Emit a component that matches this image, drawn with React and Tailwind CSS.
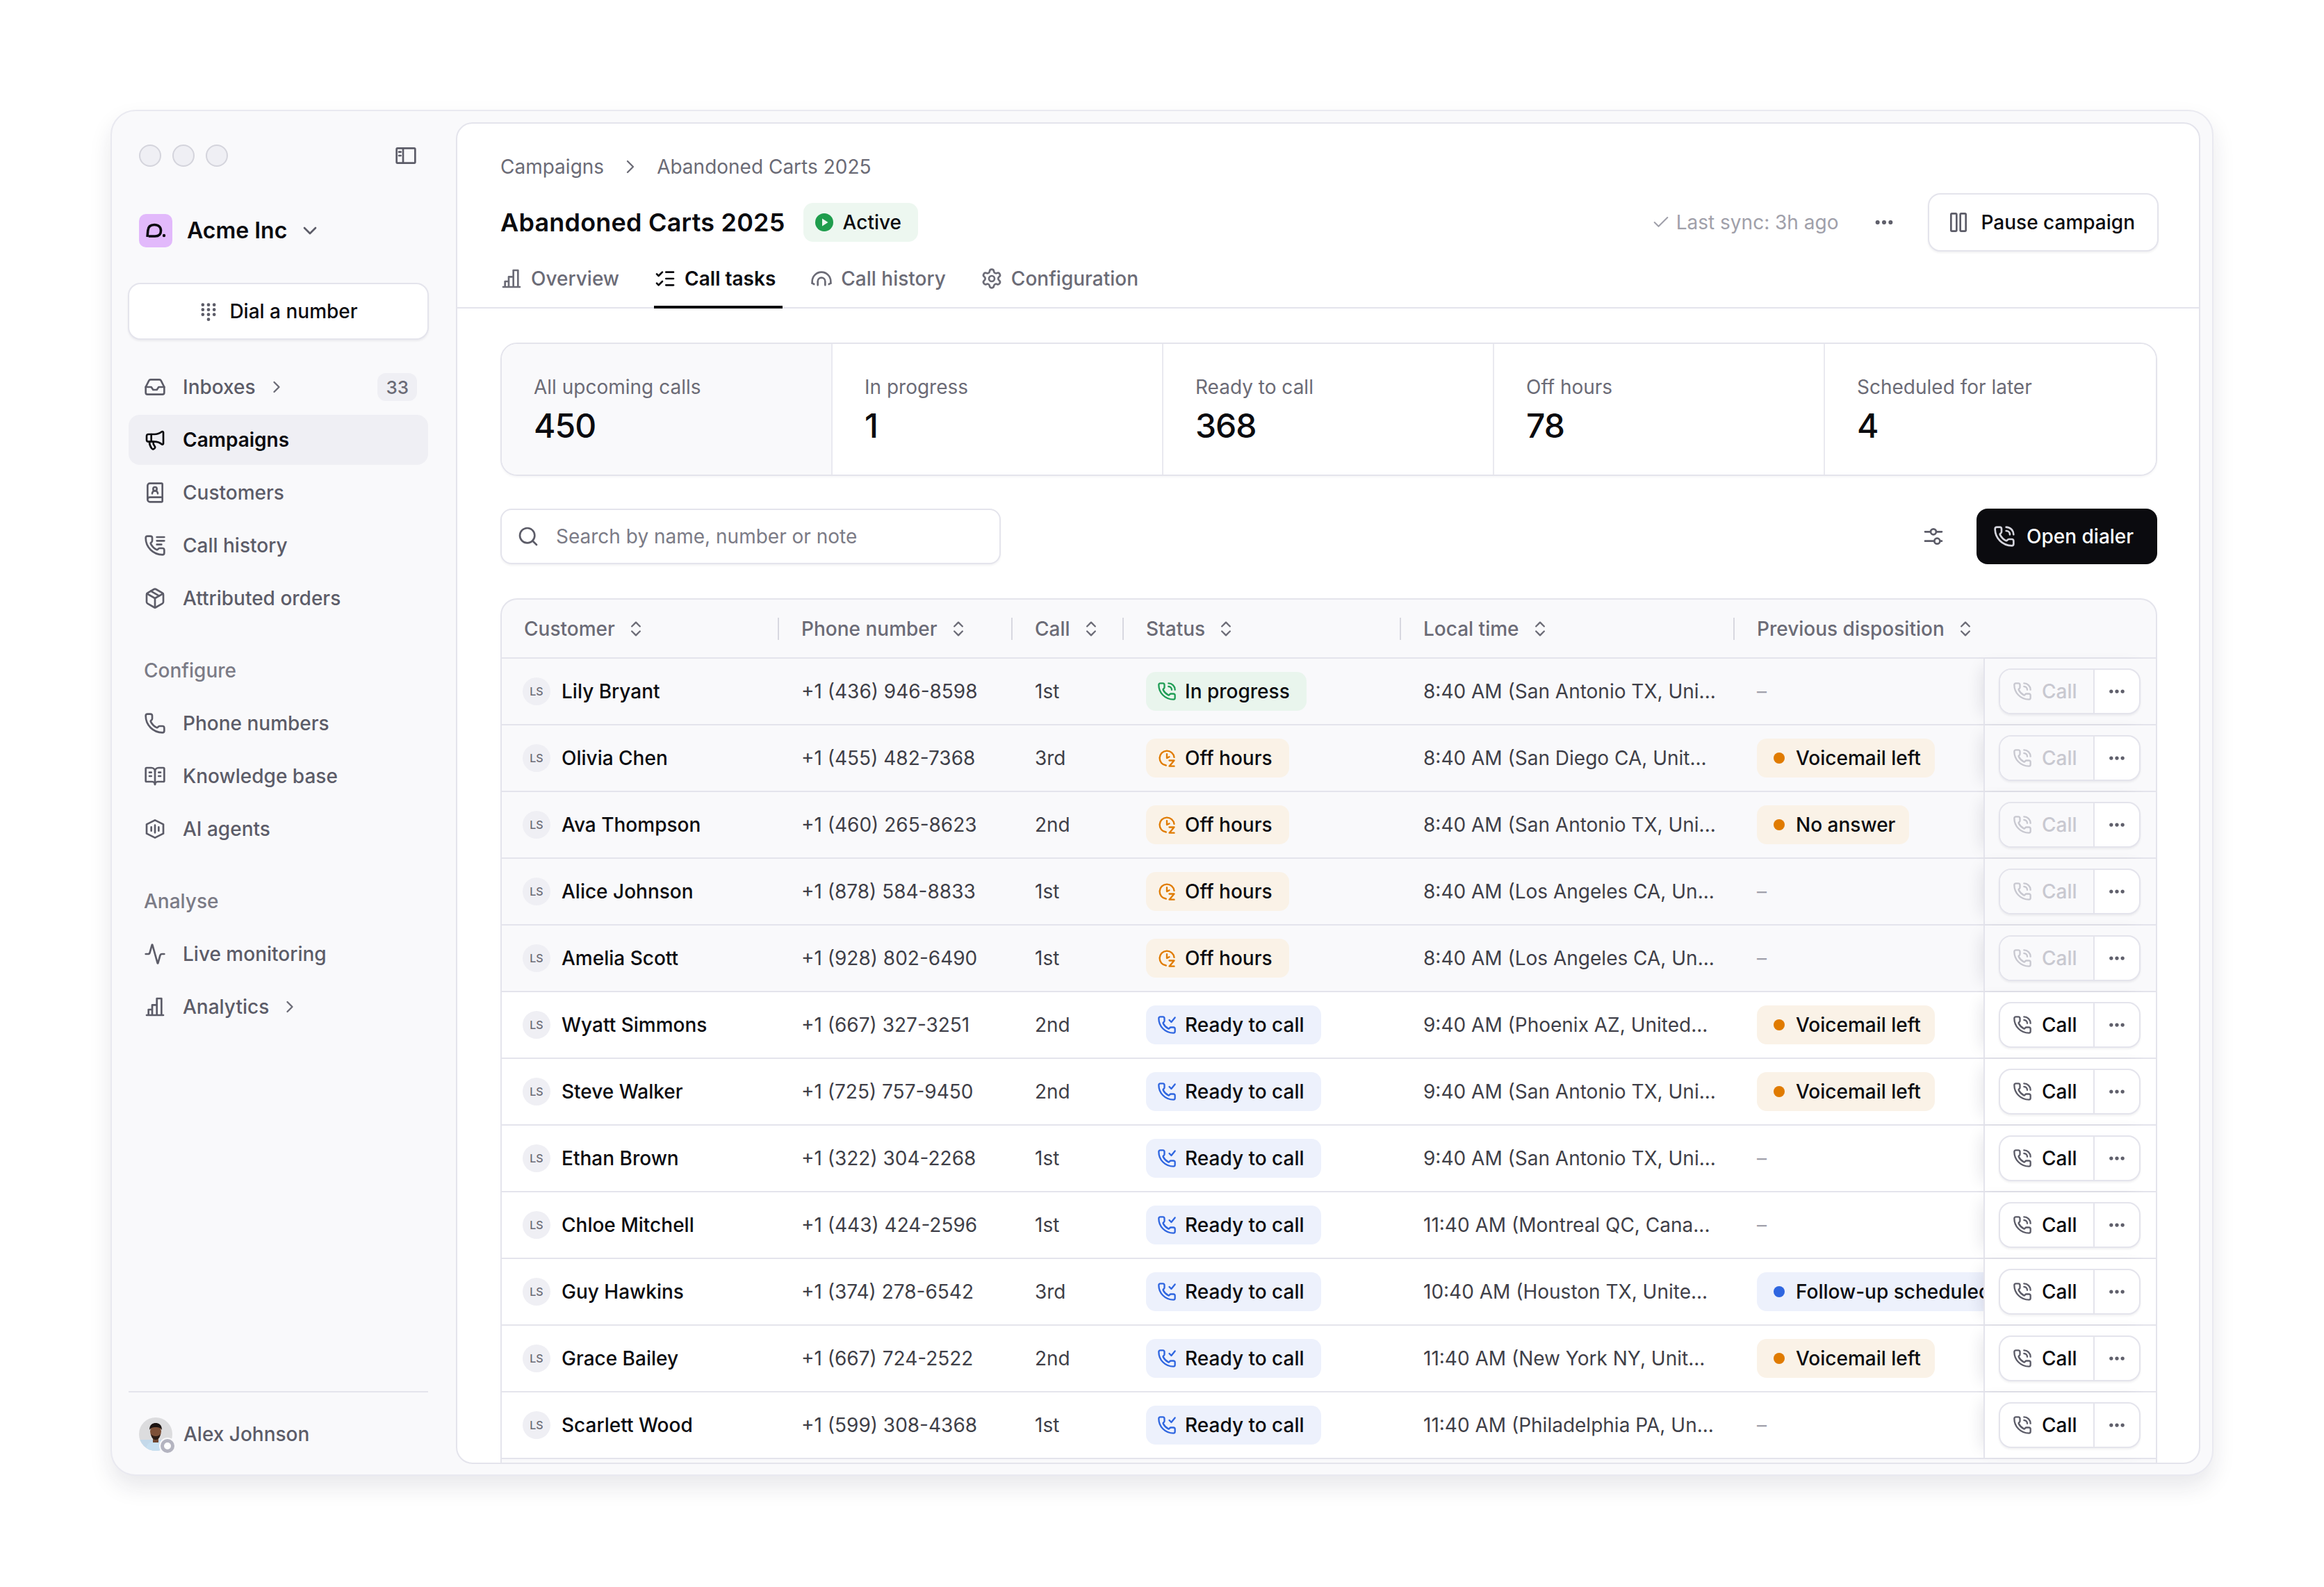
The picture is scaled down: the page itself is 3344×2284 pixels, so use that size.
import {
  BookOpenText,
  BookUser,
  Check,
  ChevronDown,
  ChevronRight,
  ChevronsUpDown,
  Activity,
  Ellipsis,
  Inbox,
  ListChecks,
  Megaphone,
  Package,
  Phone,
  Search,
  Settings,
} from 'lucide-react'

const PHONE = 'M13.832 16.568a1 1 0 0 0 1.213-.303l.355-.465A2 2 0 0 1 17 15h3a2 2 0 0 1 2 2v3a2 2 0 0 1-2 2A18 18 0 0 1 2 4a2 2 0 0 1 2-2h3a2 2 0 0 1 2 2v3a2 2 0 0 1-.8 1.6l-.468.351a1 1 0 0 0-.292 1.233 14 14 0 0 0 6.392 6.384'

function Svg({ className, children, strokeWidth = 2 }) {
  return (
    <svg className={className} viewBox="0 0 24 24" fill="none" stroke="currentColor" strokeWidth={strokeWidth} strokeLinecap="round" strokeLinejoin="round">
      {children}
    </svg>
  )
}

const PanelIcon = (p) => (
  <Svg {...p}>
    <rect x="2" y="4" width="20" height="16" rx="1" />
    <path d="M9 4v16M4.5 8h2M4.5 12h2" />
  </Svg>
)
const DialIcon = ({ className }) => (
  <svg className={className} viewBox="0 0 24 24" fill="currentColor">
    {[4, 10, 16].map((y) => [5, 12, 19].map((x) => <circle key={`${x}-${y}`} cx={x} cy={y} r="2" />))}
    <circle cx="12" cy="22" r="2" />
  </svg>
)
const CallHistoryIcon = (p) => (
  <Svg {...p}>
    <path d={PHONE} />
    <path d="M14 3h8M14 7h8M14 11h5" />
  </Svg>
)
const HexBarsIcon = (p) => (
  <Svg {...p}>
    <path d="M12 2.5 21 7v10l-9 4.5L3 17V7z" />
    <path d="M8 10v4M12 8v8M16 10v4" />
  </Svg>
)
const BarsIcon = (p) => (
  <Svg {...p}>
    <path d="M3 21h18M5 21v-6h4v6M9 21V10h5v11M14 21V3h5v18" />
  </Svg>
)
const ArcIcon = (p) => (
  <Svg {...p}>
    <path d="M2 17v-2a10 10 0 0 1 20 0v2" />
    <path d="M8 19v-4a4 4 0 0 1 8 0v4" />
    <path d="M2 17l2 1M22 17l-2 1" />
  </Svg>
)
const PauseIcon = (p) => (
  <Svg {...p}>
    <rect x="4" y="2.5" width="6" height="19" rx="1" />
    <rect x="14" y="2.5" width="6" height="19" rx="1" />
  </Svg>
)
const SliderIcon = (p) => (
  <Svg {...p}>
    <path d="M3 7h6M15 7h6M3 17h10M19 17h2" />
    <circle cx="12" cy="7" r="3" />
    <circle cx="16" cy="17" r="3" />
  </Svg>
)
const PhoneCallIcon = (p) => (
  <Svg {...p}>
    <path d={PHONE} />
    <path d="M14 2a8 8 0 0 1 8 8M14 6a4 4 0 0 1 4 4" />
  </Svg>
)
const PhoneCheckIcon = (p) => (
  <Svg {...p}>
    <path d={PHONE} />
    <path d="m15 6 2.5 2.5L22 3" />
  </Svg>
)
const SnoozeIcon = (p) => (
  <Svg {...p}>
    <path d="M21 11a9 9 0 1 0-10 10" />
    <path d="M12 7v5l3-1.5" />
    <path d="M15 15h6l-6 7h6" />
  </Svg>
)

const Dot = ({ className }) => <span className={`h-[16px] w-[16px] shrink-0 rounded-full ${className}`} />

const NAV_MAIN = [
  { label: 'Inboxes', icon: Inbox, chevron: true, badge: '33' },
  { label: 'Campaigns', icon: Megaphone, active: true },
  { label: 'Customers', icon: BookUser },
  { label: 'Call history', icon: CallHistoryIcon },
  { label: 'Attributed orders', icon: Package },
]
const NAV_CONFIGURE = [
  { label: 'Phone numbers', icon: Phone },
  { label: 'Knowledge base', icon: BookOpenText },
  { label: 'AI agents', icon: HexBarsIcon },
]
const NAV_ANALYSE = [
  { label: 'Live monitoring', icon: Activity },
  { label: 'Analytics', icon: BarsIcon, chevron: true },
]

const STATS = [
  { label: 'All upcoming calls', value: '450', active: true },
  { label: 'In progress', value: '1' },
  { label: 'Ready to call', value: '368' },
  { label: 'Off hours', value: '78' },
  { label: 'Scheduled for later', value: '4' },
]

const STATUS = {
  progress: { label: 'In progress', icon: PhoneCallIcon, pill: 'bg-[#e9f5ed]', tone: 'text-[#1f9d55]' },
  off: { label: 'Off hours', icon: SnoozeIcon, pill: 'bg-[#faf2e7]', tone: 'text-[#e07b00]' },
  ready: { label: 'Ready to call', icon: PhoneCheckIcon, pill: 'bg-[#edf1fc]', tone: 'text-[#2f66e0]' },
}

const DISPOSITION = {
  vm: { label: 'Voicemail left', pill: 'bg-[#faf2e7]', dot: 'bg-[#e07b00]' },
  na: { label: 'No answer', pill: 'bg-[#faf2e7]', dot: 'bg-[#e07b00]' },
  fu: { label: 'Follow-up scheduled', pill: 'bg-[#edf1fc]', dot: 'bg-[#2f66e0]' },
}

const ROWS = [
  ['Lily Bryant', '+1 (436) 946-8598', '1st', 'progress', '8:40 AM (San Antonio TX, Uni...', null, true],
  ['Olivia Chen', '+1 (455) 482-7368', '3rd', 'off', '8:40 AM (San Diego CA, Unit...', 'vm', true],
  ['Ava Thompson', '+1 (460) 265-8623', '2nd', 'off', '8:40 AM (San Antonio TX, Uni...', 'na', true],
  ['Alice Johnson', '+1 (878) 584-8833', '1st', 'off', '8:40 AM (Los Angeles CA, Un...', null, true],
  ['Amelia Scott', '+1 (928) 802-6490', '1st', 'off', '8:40 AM (Los Angeles CA, Un...', null, true],
  ['Wyatt Simmons', '+1 (667) 327-3251', '2nd', 'ready', '9:40 AM (Phoenix AZ, United...', 'vm', false],
  ['Steve Walker', '+1 (725) 757-9450', '2nd', 'ready', '9:40 AM (San Antonio TX, Uni...', 'vm', false],
  ['Ethan Brown', '+1 (322) 304-2268', '1st', 'ready', '9:40 AM (San Antonio TX, Uni...', null, false],
  ['Chloe Mitchell', '+1 (443) 424-2596', '1st', 'ready', '11:40 AM (Montreal QC, Cana...', null, false],
  ['Guy Hawkins', '+1 (374) 278-6542', '3rd', 'ready', '10:40 AM (Houston TX, Unite...', 'fu', false],
  ['Grace Bailey', '+1 (667) 724-2522', '2nd', 'ready', '11:40 AM (New York NY, Unit...', 'vm', false],
  ['Scarlett Wood', '+1 (599) 308-4368', '1st', 'ready', '11:40 AM (Philadelphia PA, Un...', null, false],
]

function NavItem({ item }) {
  const Icon = item.icon
  return (
    <div className={`flex h-[72px] items-center gap-[24px] rounded-[16px] pl-[22px] pr-[16px] text-[28px] ${item.active ? 'bg-[#efeff4] font-semibold text-[#0b0b0f]' : 'font-medium text-[#5c5c68]'}`}>
      <Icon className="h-[32px] w-[32px] shrink-0" strokeWidth={2} />
      <span>{item.label}</span>
      {item.chevron && <ChevronRight className="-ml-[8px] h-[28px] w-[28px] text-[#6b6b76]" strokeWidth={2} />}
      {item.badge && (
        <span className="ml-auto flex h-[40px] items-center rounded-[12px] bg-[#efeff4] px-[12px] text-[26px] font-medium text-[#6b6b76]">{item.badge}</span>
      )}
    </div>
  )
}

function NavGroup({ title, items }) {
  return (
    <div className="mt-[48px]">
      <div className="mb-[20px] flex h-[40px] items-center pl-[22px] text-[28px] font-medium text-[#7b7b86]">{title}</div>
      <div className="flex flex-col gap-[4px]">
        {items.map((item) => <NavItem key={item.label} item={item} />)}
      </div>
    </div>
  )
}

function Sidebar() {
  return (
    <aside className="flex h-full w-[495px] shrink-0 flex-col pb-[34px] pl-[24px] pr-[40px] pt-[48px]">
      <div className="flex h-[32px] items-center pl-[15px] pr-[16px]">
        <div className="flex gap-[16px]">
          <span className="h-[32px] w-[32px] rounded-full border-2 border-[#d4d4dc] bg-[#efeff4]" />
          <span className="h-[32px] w-[32px] rounded-full border-2 border-[#d4d4dc] bg-[#efeff4]" />
          <span className="h-[32px] w-[32px] rounded-full border-2 border-[#d4d4dc] bg-[#efeff4]" />
        </div>
        <PanelIcon className="ml-auto h-[32px] w-[32px] text-[#5c5c68]" />
      </div>

      <div className="mt-[68px] flex h-[48px] items-center pl-[15px]">
        <div className="flex h-[48px] w-[48px] items-center justify-center rounded-[10px] bg-[#e2b9fb]">
          <svg className="h-[32px] w-[32px]" viewBox="0 0 32 32" fill="none" stroke="#0b0b0f" strokeWidth="3.6">
            <path d="M4 25 L4.8 16 C5.2 10 9 7.5 14 7.5 C20 7.5 23.5 11 23.5 16 C23.5 21 20.5 24 15 24 L6 24" />
            <circle cx="28" cy="23" r="2.2" fill="#0b0b0f" stroke="none" />
          </svg>
        </div>
        <span className="ml-[21px] text-[32px] font-semibold text-[#0b0b0f]">Acme Inc</span>
        <ChevronDown className="ml-[17px] h-[32px] w-[32px] text-[#5c5c68]" strokeWidth={2} />
      </div>

      <button type="button" className="-mx-[1px] mt-[51px] flex h-[82px] items-center justify-center gap-[16px] rounded-[18px] border-2 border-[#e4e4ec] bg-white text-[28px] font-medium text-[#0b0b0f] shadow-[0_2px_3px_rgba(20,20,40,0.06)]">
        <DialIcon className="h-[28px] w-[28px] text-[#5c5c68]" />
        <span>Dial a number</span>
      </button>

      <nav className="mt-[32px] flex flex-col gap-[4px]">
        {NAV_MAIN.map((item) => <NavItem key={item.label} item={item} />)}
      </nav>
      <NavGroup title="Configure" items={NAV_CONFIGURE} />
      <NavGroup title="Analyse" items={NAV_ANALYSE} />

      <div className="mt-auto flex items-center border-t-2 border-[#e4e4ec] pl-[15px] pt-[36px]">
        <div className="relative h-[48px] w-[48px] shrink-0">
          <svg className="h-[48px] w-[48px]" viewBox="0 0 48 48">
            <defs>
              <clipPath id="avatar-clip"><circle cx="24" cy="24" r="24" /></clipPath>
            </defs>
            <g clipPath="url(#avatar-clip)">
              <rect width="48" height="48" fill="#dcdcde" />
              <rect y="32" width="48" height="16" fill="#c4d9ea" />
              <path d="M10 48c0-10 6-14 14-14s14 4 14 14z" fill="#c7dff0" />
              <rect x="20" y="26" width="8" height="10" fill="#6f4630" />
              <ellipse cx="24" cy="20" rx="8" ry="10" fill="#7d5038" />
              <path d="M15 18c0-8 5-10 9-10s9 2 9 10c-2-3-4-4-9-4s-7 1-9 4z" fill="#1c1412" />
              <path d="M17 24c1 6 4 8 7 8s6-2 7-8c-2 2-4 3-7 3s-5-1-7-3z" fill="#2b1c16" />
            </g>
          </svg>
          <span className="absolute -bottom-[3px] -right-[3px] h-[20px] w-[20px] rounded-full border-[5px] border-[#b4b4c0] bg-white ring-2 ring-[#f9f9fb]" />
        </div>
        <span className="ml-[16px] text-[28px] font-medium text-[#5c5c68]">Alex Johnson</span>
      </div>
    </aside>
  )
}

function Tab({ icon: Icon, label, active }) {
  return (
    <div className={`-mb-[2px] flex h-[82px] items-center gap-[12px] border-b-4 pr-[10px] text-[28px] font-medium ${active ? 'border-[#0b0b0f] font-semibold text-[#0b0b0f]' : 'border-transparent text-[#6b6b76]'}`}>
      <Icon className="h-[32px] w-[32px] shrink-0" strokeWidth={2} />
      <span>{label}</span>
    </div>
  )
}

function Header() {
  return (
    <header className="border-b-2 border-[#e4e4ec] pl-[62px] pr-[58px] pt-[42px]">
      <div className="flex h-[40px] items-center text-[28px] text-[#6b6b76]">
        <span>Campaigns</span>
        <ChevronRight className="mx-[22px] h-[32px] w-[32px]" strokeWidth={1.75} />
        <span>Abandoned Carts 2025</span>
      </div>
      <div className="mt-[18px] flex h-[84px] items-center">
        <h1 className="text-[36px] font-semibold tracking-[0.2px] text-[#0b0b0f]">Abandoned Carts 2025</h1>
        <div className="ml-[26px] flex h-[56px] items-center gap-[14px] rounded-[14px] bg-[#edf7f0] pl-[17px] pr-[24px] text-[28px] font-medium text-[#0b0b0f]">
          <svg className="h-[26px] w-[26px]" viewBox="0 0 26 26">
            <circle cx="13" cy="13" r="13" fill="#1f9d4d" />
            <path d="M10 7.5v11l8.5-5.5z" fill="#edf7f0" />
          </svg>
          <span>Active</span>
        </div>
        <div className="ml-auto flex items-center gap-[8px] text-[28px] text-[#a0a0aa]">
          <Check className="h-[28px] w-[28px]" strokeWidth={1.75} />
          <span>Last sync: 3h ago</span>
        </div>
        <Ellipsis className="ml-[50px] h-[32px] w-[32px] text-[#5c5c68]" strokeWidth={2.5} />
        <button type="button" className="ml-[47px] flex h-[84px] items-center gap-[16px] rounded-[18px] border-2 border-[#e4e4ec] bg-white pl-[26px] pr-[32px] text-[28px] font-medium text-[#0b0b0f] shadow-[0_2px_3px_rgba(20,20,40,0.06)]">
          <PauseIcon className="h-[32px] w-[32px] text-[#5c5c68]" />
          <span>Pause campaign</span>
        </button>
      </div>
      <div className="flex gap-[40px]">
        <Tab icon={BarsIcon} label="Overview" />
        <Tab icon={ListChecks} label="Call tasks" active />
        <Tab icon={ArcIcon} label="Call history" />
        <Tab icon={Settings} label="Configuration" />
      </div>
    </header>
  )
}

function Stats() {
  return (
    <div className="mt-[49px] grid h-[192px] w-[2384px] grid-cols-5 overflow-hidden rounded-[24px] border-2 border-[#e4e4ec] shadow-[0_2px_3px_rgba(20,20,40,0.04)]">
      {STATS.map((s, i) => (
        <div key={s.label} className={`flex flex-col pl-[46px] pt-[44px] ${s.active ? 'bg-[#f9f9fb]' : 'bg-white'} ${i < 4 ? 'border-r-2 border-[#e9e9f0]' : ''}`}>
          <span className="text-[28px] leading-[36px] text-[#6b6b76]">{s.label}</span>
          <span className="mt-[8px] text-[48px] font-medium leading-[60px] tracking-[-1px] text-[#0b0b0f]">{s.value}</span>
        </div>
      ))}
    </div>
  )
}

function Toolbar() {
  return (
    <div className="mt-[47px] flex h-[80px] w-[2384px] items-center">
      <div className="flex h-[80px] w-[720px] items-center gap-[24px] rounded-[16px] border-2 border-[#e4e4ec] bg-white pl-[22px] text-[28px] text-[#7b7b86] shadow-[0_2px_3px_rgba(20,20,40,0.05)]">
        <Search className="h-[32px] w-[32px] text-[#5c5c68]" strokeWidth={2} />
        <span>Search by name, number or note</span>
      </div>
      <SliderIcon className="ml-auto h-[32px] w-[32px] text-[#5c5c68]" />
      <button type="button" className="ml-[46px] flex h-[80px] w-[260px] items-center gap-[16px] rounded-[16px] bg-[#0b0b0f] pl-[24px] text-[28px] font-medium text-white">
        <PhoneCallIcon className="h-[32px] w-[32px] text-[#d4d4dc]" />
        <span>Open dialer</span>
      </button>
    </div>
  )
}

function HeadCell({ label, className, sep = true }) {
  return (
    <div className={`flex h-[32px] shrink-0 items-center border-[#d8d8e0] pl-[32px] text-[28px] font-medium text-[#6b6b76] ${sep ? 'border-r-2' : ''} ${className}`}>
      <span>{label}</span>
      <ChevronsUpDown className="ml-[16px] h-[28px] w-[28px] text-[#6b6b76]" strokeWidth={2} />
    </div>
  )
}

function StatusPill({ kind }) {
  const s = STATUS[kind]
  const Icon = s.icon
  return (
    <div className={`flex h-[56px] w-fit items-center gap-[12px] rounded-[14px] pl-[16px] pr-[24px] text-[28px] font-medium text-[#0b0b0f] ${s.pill}`}>
      <Icon className={`h-[28px] w-[28px] shrink-0 ${s.tone}`} />
      <span>{s.label}</span>
    </div>
  )
}

function DispositionPill({ kind }) {
  const d = DISPOSITION[kind]
  return (
    <div className={`flex h-[56px] w-fit items-center gap-[16px] whitespace-nowrap rounded-[14px] pl-[24px] pr-[20px] text-[28px] font-medium text-[#0b0b0f] ${d.pill}`}>
      <Dot className={d.dot} />
      <span>{d.label}</span>
    </div>
  )
}

function Row({ row }) {
  const [name, phone, call, status, time, disposition, disabled] = row
  return (
    <div className={`flex h-[96px] shrink-0 items-center border-b-2 border-[#e4e4ec] text-[28px] ${disabled ? 'bg-[#f9f9fb]' : 'bg-white'}`}>
      <div className="flex w-[399px] shrink-0 items-center gap-[16px] pl-[30px] font-medium text-[#0b0b0f]">
        <span className="flex h-[40px] w-[40px] items-center justify-center rounded-full bg-[#efeff4] text-[16px] font-medium text-[#6b6b76]">LS</span>
        <span>{name}</span>
      </div>
      <div className="w-[336px] shrink-0 pl-[32px] text-[#3f3f48]">{phone}</div>
      <div className="w-[160px] shrink-0 pl-[32px] text-[#3f3f48]">{call}</div>
      <div className="w-[399px] shrink-0 pl-[32px]"><StatusPill kind={status} /></div>
      <div className="w-[480px] shrink-0 whitespace-nowrap pl-[32px] text-[#3f3f48]">{time}</div>
      <div className="min-w-0 flex-1 overflow-hidden pl-[32px]">
        {disposition ? <DispositionPill kind={disposition} /> : <span className="text-[#a0a0aa]">–</span>}
      </div>
      <div className={`relative z-10 flex h-full w-[248px] shrink-0 items-center border-l-2 border-[#e4e4ec] pl-[20px] shadow-[-14px_0_24px_-14px_rgba(30,30,60,0.14)] ${disabled ? 'bg-[#f9f9fb]' : 'bg-white'}`}>
        <div className="flex h-[66px] w-[204px] overflow-hidden rounded-[18px] border-2 border-[#e4e4ec] bg-white shadow-[0_2px_3px_rgba(20,20,40,0.06)]">
          <div className={`flex w-[136px] items-center gap-[14px] border-r-2 border-[#e4e4ec] pl-[18px] font-medium ${disabled ? 'bg-[#f9f9fb] text-[#c8c8d0]' : 'text-[#0b0b0f]'}`}>
            <PhoneCallIcon className={`h-[28px] w-[28px] ${disabled ? 'text-[#c8c8d0]' : 'text-[#5c5c68]'}`} />
            <span>Call</span>
          </div>
          <div className="flex flex-1 items-center justify-center text-[#5c5c68]">
            <Ellipsis className="h-[28px] w-[28px]" strokeWidth={2.5} />
          </div>
        </div>
      </div>
    </div>
  )
}

function CallTable() {
  return (
    <div className="mt-[49px] min-h-0 w-[2384px] flex-1 overflow-hidden rounded-t-[24px] border-x-2 border-t-2 border-[#e4e4ec] bg-[#f9f9fb]">
      <div className="flex h-[85px] items-center border-b-2 border-[#e4e4ec]">
        <HeadCell label="Customer" className="w-[399px]" />
        <HeadCell label="Phone number" className="w-[336px]" />
        <HeadCell label="Call" className="w-[160px]" />
        <HeadCell label="Status" className="w-[399px]" />
        <HeadCell label="Local time" className="w-[480px]" />
        <HeadCell label="Previous disposition" sep={false} />
      </div>
      {ROWS.map((row) => <Row key={row[0]} row={row} />)}
    </div>
  )
}

export default function App() {
  return (
    <div className="h-[2284px] overflow-hidden bg-white pl-[159px] pt-[158px] font-['Inter',sans-serif]">
      <div className="flex h-[1966px] w-[3026px] rounded-[36px] border-2 border-[#e9e9f0] bg-[#f9f9fb] shadow-[0_16px_32px_rgba(30,30,60,0.1)]">
        <Sidebar />
        <main className="mt-[16px] flex h-[1931px] w-[2510px] shrink-0 flex-col overflow-hidden rounded-[24px] border-2 border-[#e4e4ec] bg-white">
          <Header />
          <div className="flex min-h-0 flex-1 flex-col pl-[62px]">
            <Stats />
            <Toolbar />
            <CallTable />
          </div>
        </main>
      </div>
    </div>
  )
}
